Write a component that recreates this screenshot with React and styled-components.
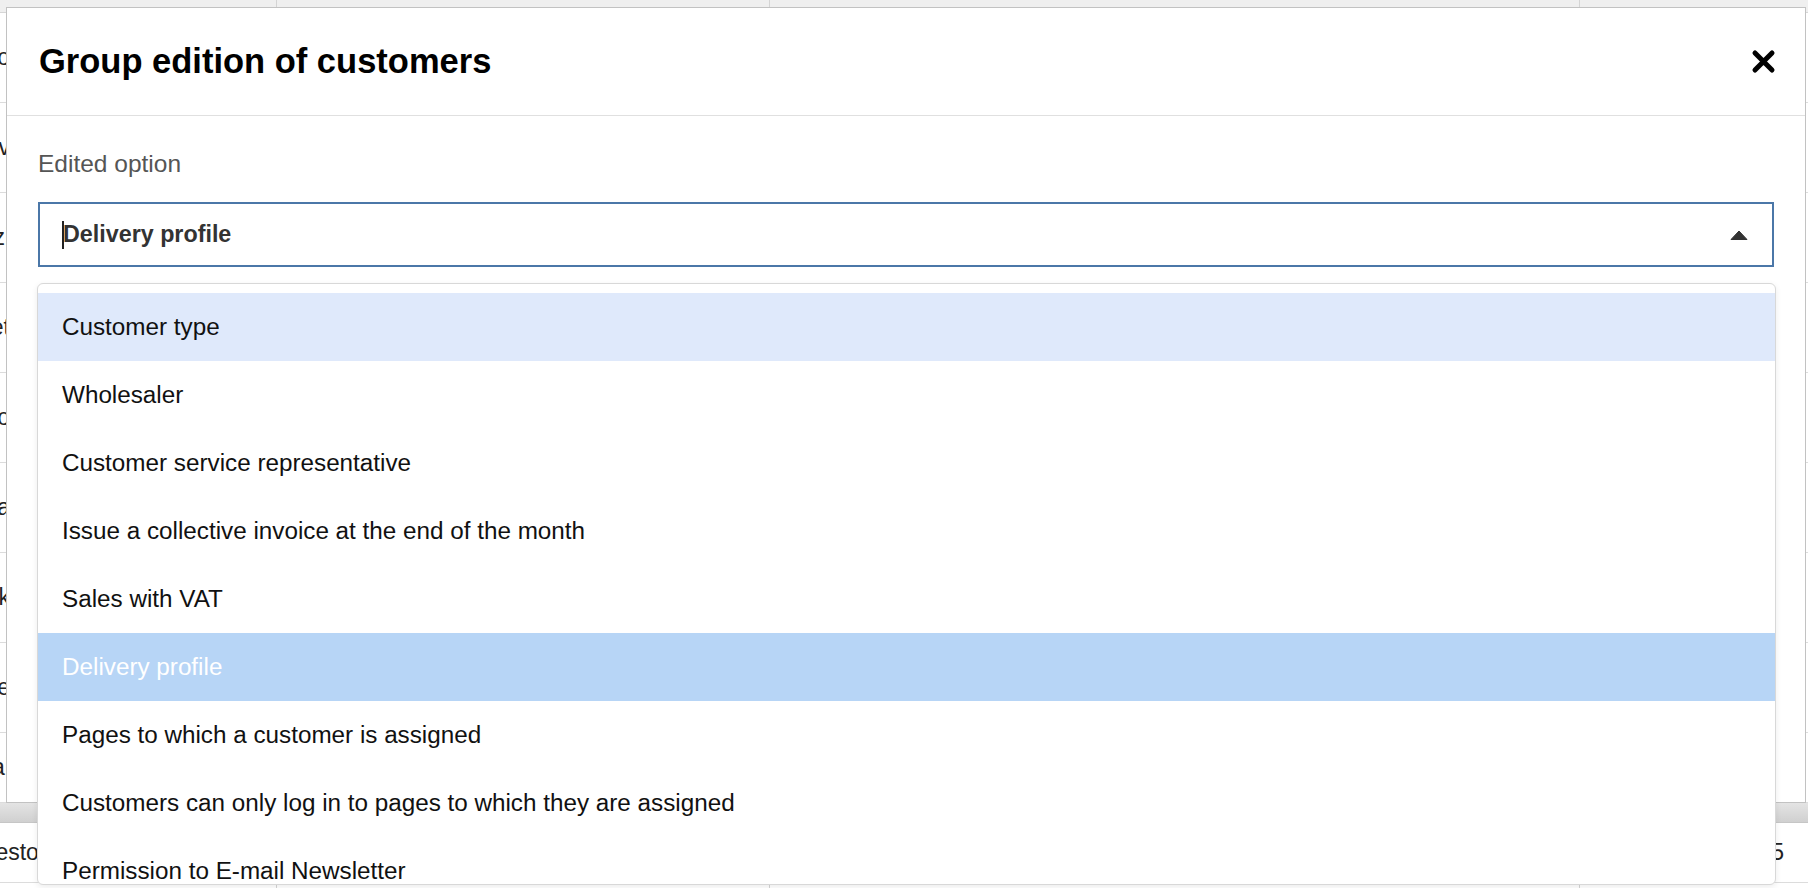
import React from "react";
import styled, { createGlobalStyle } from "styled-components";

const GlobalStyle = createGlobalStyle`
    * { box-sizing: border-box; }
    html, body { margin: 0; padding: 0; }
    body {
        font-family: "Liberation Sans", Arial, Helvetica, sans-serif;
        background: #ffffff;
        color: #111;
    }
`;

const Page = styled.div`
    position: relative;
    width: 100vw;
    height: 100vh;
    overflow: hidden;
`;

// table that sits behind the modal
const Table = styled.div`
    display: flex;
    flex-direction: column;
    font-size: 23px;
    color: #222;
`;

const TableRow = styled.div`
    display: grid;
    grid-template-columns: 277px 493px 810px 1fr;
    height: ${(p) => p.$height}px;
    background: ${(p) => (p.$head ? "#efefef" : "#ffffff")};
    border-bottom: 1px solid ${(p) => (p.$head ? "#d6d6d6" : "#dcdcdc")};
`;

const Cell = styled.div`
    display: flex;
    align-items: center;
    justify-content: ${(p) => (p.$end ? "flex-end" : "flex-start")};
    border-right: 1px solid #d4d4d4;
    overflow: hidden;
    white-space: nowrap;
    padding-right: ${(p) => p.$pad || 0}px;
    &:last-child { border-right: none; }
`;

const Clip = styled.span`
    display: flex;
    justify-content: flex-end;
    width: ${(p) => p.$w}px;
    overflow: hidden;
    flex-shrink: 0;
`;

const Band = styled.div`
    height: 20px;
    background: linear-gradient(#e4e4e4, #d0d0d0);
    border-bottom: 1px solid #c6c6c6;
`;

// modal
const Modal = styled.div`
    position: absolute;
    top: 7px;
    left: 6px;
    width: 1800px;
    height: 796px;
    background: #ffffff;
    border: 1px solid #c2c2c2;
    display: flex;
    flex-direction: column;
`;

const ModalHeader = styled.div`
    display: flex;
    align-items: center;
    justify-content: space-between;
    height: 108px;
    padding: 0 29px 0 32px;
    border-bottom: 1px solid #e0e0e0;
`;

const Title = styled.h2`
    margin: 0;
    font-size: 34.5px;
    font-weight: 700;
    line-height: 1;
    color: #000;
`;

const CloseButton = styled.button`
    border: none;
    background: none;
    padding: 0;
    width: 26px;
    height: 26px;
    display: flex;
    align-items: center;
    justify-content: center;
    cursor: pointer;
`;

const ModalBody = styled.div`
    padding: 34px 31px 0 31px;
`;

const Label = styled.div`
    font-size: 24.5px;
    line-height: 28px;
    color: #555;
    margin-bottom: 24px;
`;

const Field = styled.div`
    position: relative;
`;

const Control = styled.div`
    display: flex;
    align-items: center;
    justify-content: space-between;
    height: 65px;
    border: 2px solid #4b77a8;
    padding: 0 24px 0 22px;
    background: #fff;
`;

const Value = styled.div`
    display: flex;
    align-items: center;
    font-size: 23.3px;
    font-weight: 700;
    color: #333;
`;

const Caret = styled.span`
    display: inline-block;
    width: 0;
    height: 28px;
    border-left: 2px solid #222;
    margin-right: -1px;
`;

const Menu = styled.div`
    position: absolute;
    top: 81px;
    left: -1px;
    right: -2px;
    height: 602px;
    overflow: hidden;
    background: #fff;
    border: 1px solid #d8d8d8;
    border-radius: 6px;
    box-shadow: 0 2px 6px rgba(0, 0, 0, 0.08);
    padding-top: 9px;
`;

const Option = styled.div`
    height: 68px;
    line-height: 68px;
    padding: 0 24px;
    font-size: 24.25px;
    white-space: nowrap;
    color: ${(p) => (p.$selected ? "#ffffff" : "#111")};
    background: ${(p) => (p.$selected ? "#b7d5f6" : p.$focused ? "#dfe9fb" : "transparent")};
`;

const leftWords = ["Expo", "Kiev", "Gizi", "Zet", "Demo", "Alfa", "Bank", "Rowe", "Opal"];

const options = [
  "Customer type",
  "Wholesaler",
  "Customer service representative",
  "Issue a collective invoice at the end of the month",
  "Sales with VAT",
  "Delivery profile",
  "Pages to which a customer is assigned",
  "Customers can only log in to pages to which they are assigned",
  "Permission to E-mail Newsletter",
  "Discount group",
];

const CloseIcon = () => (
  <svg width="25" height="25" viewBox="0 0 25 25">
    <path d="M4 4 L21 21 M21 4 L4 21" stroke="#000" strokeWidth="5" strokeLinecap="round" />
  </svg>
);

const ArrowUp = () => (
  <svg width="18" height="10" viewBox="0 0 18 10">
    <path d="M1 9.5 L9 1 L17 9.5 Z" fill="#333" stroke="#333" strokeWidth="1" strokeLinejoin="round" />
  </svg>
);

export default function App() {
  return (
    <Page>
      <GlobalStyle />
      <Table>
        <TableRow $head $height={13}>
          <Cell />
          <Cell />
          <Cell />
          <Cell />
        </TableRow>
        {leftWords.map((w, i) => (
          <TableRow key={w} $height={i === leftWords.length - 1 ? 70 : 90}>
            <Cell>
              <Clip $w={10}>{w}</Clip>
            </Cell>
            <Cell />
            <Cell />
            <Cell />
          </TableRow>
        ))}
        <Band />
        <TableRow $height={60}>
          <Cell>
            <Clip $w={67}>Testowy</Clip>
          </Cell>
          <Cell />
          <Cell />
          <Cell $end $pad={24}>5</Cell>
        </TableRow>
        <TableRow $height={60}>
          <Cell />
          <Cell />
          <Cell />
          <Cell />
        </TableRow>
      </Table>

      <Modal>
        <ModalHeader>
          <Title>Group edition of customers</Title>
          <CloseButton aria-label="Close">
            <CloseIcon />
          </CloseButton>
        </ModalHeader>
        <ModalBody>
          <Label>Edited option</Label>
          <Field>
            <Control>
              <Value>
                <Caret />
                Delivery profile
              </Value>
              <ArrowUp />
            </Control>
            <Menu>
              {options.map((o, i) => (
                <Option key={o} $focused={i === 0} $selected={o === "Delivery profile"}>
                  {o}
                </Option>
              ))}
            </Menu>
          </Field>
        </ModalBody>
      </Modal>
    </Page>
  );
}
